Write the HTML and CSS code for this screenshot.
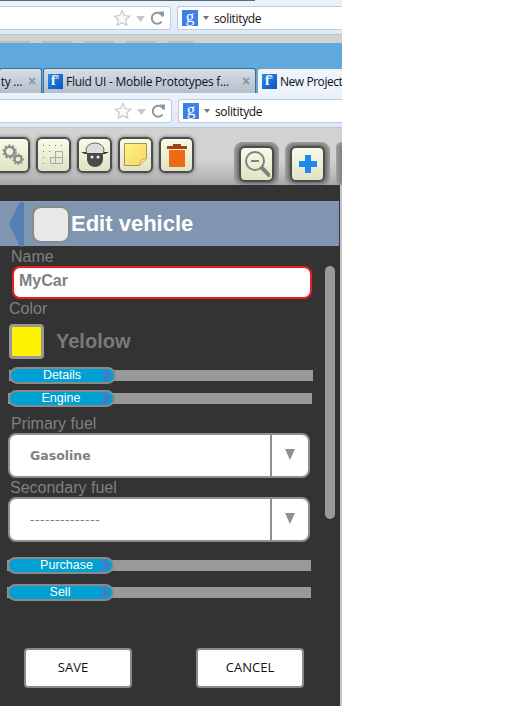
FILE: index.html
```html
<!DOCTYPE html>
<html lang="en">
<head>
<meta charset="utf-8">
<title>Edit vehicle</title>
<link rel="stylesheet" href="styles.css">
</head>
<body>
<div class="shot">
  <div class="chrome-top">
    <div class="tabs-edge"></div>
    <div class="navbar navbar-a">
      <div class="urlbar">
        <svg class="nav-icons" width="54" height="18" viewBox="0 0 54 18"><path d="M9 1.500l2.300 5 5.400.6-4 3.700 1.100 5.400L9 13.600l-4.800 2.600 1.100-5.400-4-3.700 5.400-.6z" fill="#fafafa" stroke="#c4c8cc" stroke-width="1.200"/><path d="M23 7h9l-4.500 6z" fill="#c5c9cd"/><path d="M49.500 7.500a5.500 5.500 0 1 0-.8 5" fill="none" stroke="#8f979e" stroke-width="2"/><path d="M45.500 2.500h5.500v5.500z" fill="#8f979e"/></svg>
      </div>
      <div class="searchbar">
        <span class="g-icon">g</span><span class="caret"></span><span class="query">solitityde</span>
      </div>
    </div>
    <div class="shadow-band"><div class="shadow-blobs"></div></div>
    <div class="blue-band"></div>
    <div class="tabstrip">
      <div class="tab tab-stub"><span class="tab-title">ty ...</span><span class="tab-x">×</span></div>
      <div class="tab tab-mid"><span class="favicon">f<sup>8</sup></span><span class="tab-title">Fluid UI - Mobile Prototypes f...</span><span class="tab-x">×</span></div>
      <div class="tab tab-active"><span class="favicon">f<sup>8</sup></span><span class="tab-title">New Project</span></div>
    </div>
    <div class="navbar navbar-b">
      <div class="urlbar">
        <svg class="nav-icons" width="54" height="18" viewBox="0 0 54 18"><path d="M9 1.500l2.300 5 5.400.6-4 3.700 1.100 5.400L9 13.600l-4.800 2.600 1.100-5.400-4-3.700 5.400-.6z" fill="#fafafa" stroke="#c4c8cc" stroke-width="1.200"/><path d="M23 7h9l-4.500 6z" fill="#c5c9cd"/><path d="M49.500 7.500a5.500 5.500 0 1 0-.8 5" fill="none" stroke="#8f979e" stroke-width="2"/><path d="M45.500 2.500h5.500v5.500z" fill="#8f979e"/></svg>
      </div>
      <div class="searchbar">
        <span class="g-icon">g</span><span class="caret"></span><span class="query">solitityde</span>
      </div>
    </div>
  </div>

  <div class="toolbar">
    <div class="tool-group">
      <button class="tool tool-cut" type="button">
        <svg width="24" height="22" viewBox="0 0 28 26"><g fill="none" stroke="#8a8a8a"><circle cx="10" cy="9" r="5.500" stroke-width="2.600"/><circle cx="10" cy="9" r="7.500" stroke-width="2" stroke-dasharray="2.500 2.200"/><circle cx="20" cy="18" r="4" stroke-width="2.400"/><circle cx="20" cy="18" r="5.800" stroke-width="1.800" stroke-dasharray="2 1.800"/></g></svg>
      </button>
      <button class="tool" type="button">
        <svg width="26" height="26" viewBox="0 0 26 26"><g fill="#777"><rect x="2" y="3" width="1" height="1"/><rect x="8" y="3" width="1" height="1"/><rect x="14" y="3" width="1" height="1"/><rect x="20" y="3" width="1" height="1"/><rect x="2" y="9" width="1" height="1"/><rect x="8" y="9" width="1" height="1"/><rect x="2" y="15" width="1" height="1"/><rect x="2" y="21" width="1" height="1"/></g><path d="M14.500 9.500h7v12h-12v-6h5zM14.500 15.500h7M14.500 9.500v12" fill="none" stroke="#aaa"/></svg>
      </button>
      <button class="tool" type="button">
        <svg width="30" height="28" viewBox="0 0 30 28"><path d="M1 11h28l-4 2H5z" fill="#333"/><ellipse cx="15" cy="9" rx="9" ry="7" fill="#ddd" stroke="#666"/><path d="M7 12h16v6c0 5-4 8-8 8s-8-3-8-8z" fill="#4a4a4a"/><circle cx="12" cy="16" r="1.500" fill="#eee"/><circle cx="18" cy="16" r="1.500" fill="#eee"/></svg>
      </button>
      <button class="tool" type="button">
        <svg width="24" height="24" viewBox="0 0 24 24"><defs><linearGradient id="note" x1="0" y1="0" x2="1" y2="1"><stop offset="0" stop-color="#fdf08a"/><stop offset="1" stop-color="#fbd75e"/></linearGradient></defs><path d="M.5.500h22v15l-7 7H.5z" fill="url(#note)" stroke="#9a9468"/><path d="M22.500 15.500c-3 0-7 1-7 7z" fill="#f6e9c0" stroke="#c9a860"/></svg>
      </button>
      <button class="tool" type="button">
        <svg width="20" height="26" viewBox="0 0 20 26"><path d="M6 2h8v2H6z" fill="#a8400e"/><path d="M0 4h20v3H0z" fill="#a8400e"/><path d="M2 8h16v17H2z" fill="#ee6b13"/></svg>
      </button>
    </div>
    <div class="zoom-group">
      <div class="halo"><button class="tool tool-s" type="button">
        <svg width="26" height="28" viewBox="0 0 26 28"><circle cx="11" cy="11" r="9" fill="none" stroke="#808080" stroke-width="2"/><path d="M7 11h8" stroke="#808080" stroke-width="2"/><path d="M18 18l7 7" stroke="#808080" stroke-width="4" stroke-linecap="round"/></svg>
      </button></div>
      <div class="halo"><button class="tool tool-s" type="button">
        <svg width="18" height="18" viewBox="0 0 18 18"><path d="M6 0h6v6h6v6h-6v6H6v-6H0V6h6z" fill="#1e88ec"/></svg>
      </button></div>
      <div class="halo halo-cut"></div>
    </div>
  </div>

  <main class="phone">
    <header class="title-bar">
      <span class="back"></span>
      <span class="title-thumb"></span>
      <h1 class="title">Edit vehicle</h1>
    </header>
    <div class="content">
      <div class="form">
        <div class="label label-name">Name</div>
        <div class="name-input">MyCar</div>
        <div class="label label-color">Color</div>
        <div class="color-row"><span class="swatch"></span><span class="color-name">Yelolow</span></div>
        <div class="bar bar-details"><span class="pill"><span class="pill-text">Details</span><span class="chev"></span></span></div>
        <div class="bar bar-engine"><span class="pill"><span class="pill-text">Engine</span><span class="chev"></span></span></div>
        <div class="label label-primary">Primary fuel</div>
        <div class="select"><span class="select-value">Gasoline</span><span class="select-arrow"><i></i></span></div>
        <div class="label label-secondary">Secondary fuel</div>
        <div class="select select-second"><span class="select-value select-dash">--------------</span><span class="select-arrow"><i></i></span></div>
        <div class="bar bar-purchase"><span class="pill"><span class="pill-text">Purchase</span><span class="chev"></span></span></div>
        <div class="bar bar-sell"><span class="pill"><span class="pill-text">Sell</span><span class="chev"></span></span></div>
        <div class="actions">
          <button class="action action-save" type="button">SAVE</button>
          <button class="action" type="button">CANCEL</button>
        </div>
      </div>
      <div class="scroll"></div>
    </div>
  </main>
</div>
</body>
</html>
```

FILE: styles.css
```css
* { box-sizing: border-box; }
html, body { margin: 0; padding: 0; background: #fff; }
body { width: 513px; height: 706px; overflow: hidden; font-family: "Liberation Sans", Arial, sans-serif; }
.shot { width: 342px; height: 706px; overflow: hidden; display: flex; flex-direction: column; }
button { font: inherit; margin: 0; }

.chrome-top { flex: none; background: #e7f0fb; }
.tabs-edge { height: 1px; width: 255px; background: #5b6672; }
.navbar { display: flex; gap: 6px; background: linear-gradient(#eaf2fc, #dfe9f6); }
.navbar-a { height: 34px; padding: 5px 0 0; margin-left: -4px; border-bottom: 1px solid #b9c6d6; }
.navbar-b { height: 35px; padding: 6px 0 0; margin-left: -3px; border-bottom: 1px solid #b9c6d6; }
.urlbar { width: 175px; height: 24px; background: #fff; border: 1px solid #bccbdd; border-radius: 3px; display: flex; justify-content: flex-end; align-items: center; padding-right: 3px; }
.searchbar { flex: 1; height: 24px; background: #fff; border: 1px solid #bccbdd; border-right: 0; border-radius: 3px 0 0 3px; display: flex; align-items: center; padding-left: 4px; }
.nav-icons { display: block; }
.g-icon { width: 16px; height: 16px; background: #3d7fe6; color: #fff; font: 17px/13px "Liberation Serif", serif; text-align: center; }
.caret { width: 0; height: 0; margin: 0 5px 0 5px; border: 3px solid transparent; border-top: 4px solid #777; border-bottom: 0; }
.query { font: 12px "Open Sans", sans-serif; color: #111; letter-spacing: -.35px; }

.shadow-band { height: 8px; background: #d2d2d2; padding-top: 6px; }
.shadow-blobs { width: 193px; height: 2px; background: repeating-linear-gradient(90deg, #bdbdbd 0 30px, #d0d0d0 30px 42px); }
.blue-band { height: 25px; background: #60a9dc; }
.tabstrip { height: 25px; display: flex; gap: 1px; background: #60a9dc; margin-left: -1px; }
.tab { height: 25px; display: flex; align-items: center; border: 1px solid #3f6f93; border-bottom: 0; border-radius: 3px 3px 0 0; font: 12px "Open Sans", sans-serif; letter-spacing: -.25px; color: #111; background: linear-gradient(#d6dee8, #b4bfcc); white-space: nowrap; overflow: hidden; }
.tab-stub { width: 43px; justify-content: flex-end; padding-right: 5px; gap: 6px; flex: none; }
.tab-mid { width: 213px; padding-left: 4px; flex: none; }
.tab-mid .tab-title { width: 179px; overflow: hidden; padding-left: 3px; flex: none; }
.tab-active { flex: none; width: 90px; padding-left: 4px; background: #eef4fc; border-color: #7f9db8; border-right: 0; border-radius: 3px 0 0 0; letter-spacing: -.45px; }
.tab-active .tab-title { padding-left: 3px; }
.tab-x { color: #8a949e; font: bold 14px/1 "Liberation Sans", sans-serif; }
.favicon { flex: none; width: 15px; height: 15px; background: linear-gradient(135deg, #2a8bec, #0a55b8); color: #fff; font: bold 14px/14px "Liberation Serif", serif; padding-left: 3px; overflow: hidden; }
.favicon sup { font: 6px/6px "Liberation Sans", sans-serif; vertical-align: 6px; }

.toolbar { flex: none; height: 57px; background: linear-gradient(#d2d2d2 0, #d2d2d2 55%, #b9b9b9 85%, #a5a5a5 100%); display: flex; overflow: hidden; }
.tool-group { display: flex; gap: 6px; margin-left: -5px; padding-top: 9px; }
.tool { width: 35px; height: 36px; padding: 0; border: 2px solid #4c4c4c; border-radius: 6px; background: linear-gradient(#fafbe8, #dfe2c4); box-shadow: 0 0 3px 1px rgba(70,70,70,.45); display: flex; align-items: center; justify-content: center; }
.tool svg { display: block; }
.zoom-group { display: flex; gap: 6px; margin-left: 40px; padding-top: 14px; flex: none; }
.halo { width: 45px; height: 44px; padding: 4px 5px; border-radius: 9px; background: #858585; box-shadow: inset 0 0 3px 2px #a0a0a0; }
.tool-s { width: 35px; height: 36px; }
.halo-cut { width: 12px; }

.phone { flex: 1; width: 342px; background: #333; border-right: 2px solid #c4c4c4; padding-top: 16px; display: flex; flex-direction: column; overflow: hidden; }
.title-bar { flex: none; height: 45px; width: 339px; background: #8095b0; display: flex; align-items: center; border-top: 1px solid #8aa0bc; }
.back { width: 15px; height: 45px; margin-left: 9px; background: #557eb2; clip-path: polygon(73% 0, 100% 0, 100% 100%, 73% 100%, 0 50%); flex: none; }
.title-thumb { width: 38px; height: 37px; margin-left: 8px; background: #e8e8e8; border: 2px solid #8a8a8a; border-radius: 9px; flex: none; }
.title { margin: 0 0 0 1px; font: bold 22px/1 "Liberation Sans", sans-serif; color: #fff; }

.content { flex: 1; display: flex; min-height: 0; }
.form { width: 325px; flex: none; display: flex; flex-direction: column; }
.label { color: #808080; font-size: 16px; line-height: 18px; }
.label-name { margin: 2px 0 0 11px; }
.name-input { width: 300px; height: 33px; margin: 0 0 0 12px; background: #fff; border: 2px solid #ed1c24; border-radius: 8px; color: #808080; font-weight: bold; font-size: 16px; line-height: 26px; padding-left: 5px; }
.label-color { margin: 1px 0 0 9px; }
.color-row { display: flex; align-items: center; margin: 6px 0 0 9px; height: 35px; }
.swatch { width: 35px; height: 35px; background: #fff200; border: 3px solid #999; border-radius: 4px; }
.color-name { margin-left: 12px; color: #7a7a7a; font-weight: bold; font-size: 20px; }

.bar { height: 11px; background: #999; display: flex; align-items: center; }
.bar-details { width: 304px; margin: 11px 0 0 9px; }
.bar-engine { width: 304px; margin: 12px 0 0 8px; }
.bar-purchase { width: 304px; margin: 18px 0 0 7px; }
.bar-sell { width: 304px; margin: 16px 0 0 7px; }
.pill { flex: none; width: 107px; height: 17px; margin-top: -1px; background: #00a0d2; border: 2px solid #8a8a8a; border-radius: 9px; color: #fff; font-size: 12.5px; line-height: 13px; display: flex; justify-content: space-between; align-items: center; }
.pill-text { flex: 1; text-align: center; padding-left: 13px; }
.bar-purchase .pill-text { padding-left: 26px; }
.chev { flex: none; width: 9px; height: 9px; margin-right: 5px; border-top: 3px solid #5d6fc0; border-right: 3px solid #5d6fc0; transform: rotate(45deg); }

.label-primary { margin: 11px 0 0 11px; }
.label-secondary { margin: 1px 0 0 10px; }
.select { width: 302px; height: 45px; margin: 0 0 0 8px; background: #fff; border: 2px solid #8f8f8f; border-radius: 8px; display: flex; align-items: center; }
.select-second { height: 45px; }
.select-value { flex: 1; padding-left: 20px; color: #808080; font: bold 12.5px "DejaVu Sans", sans-serif; }
.select-dash { font-weight: normal; letter-spacing: .5px; }
.select-arrow { flex: none; width: 38px; align-self: stretch; border-left: 2px solid #8f8f8f; display: flex; align-items: center; justify-content: center; }
.select-arrow i { width: 0; height: 0; border: 5.500px solid transparent; border-top: 11px solid #8f8f8f; border-bottom: 0; margin-bottom: 3px; }

.actions { display: flex; margin: 50px 0 0 24px; gap: 64px; }
.action { width: 108px; height: 40px; background: #fff; border: 2px solid #8a8a8a; border-radius: 4px; font: 13px "Open Sans", sans-serif; color: #111; padding: 0 0 3px; }
.action-save { padding-right: 10px; }

.scroll { flex: none; width: 10px; height: 253px; margin-top: 20px; background: #999; border-radius: 5px; }
```
